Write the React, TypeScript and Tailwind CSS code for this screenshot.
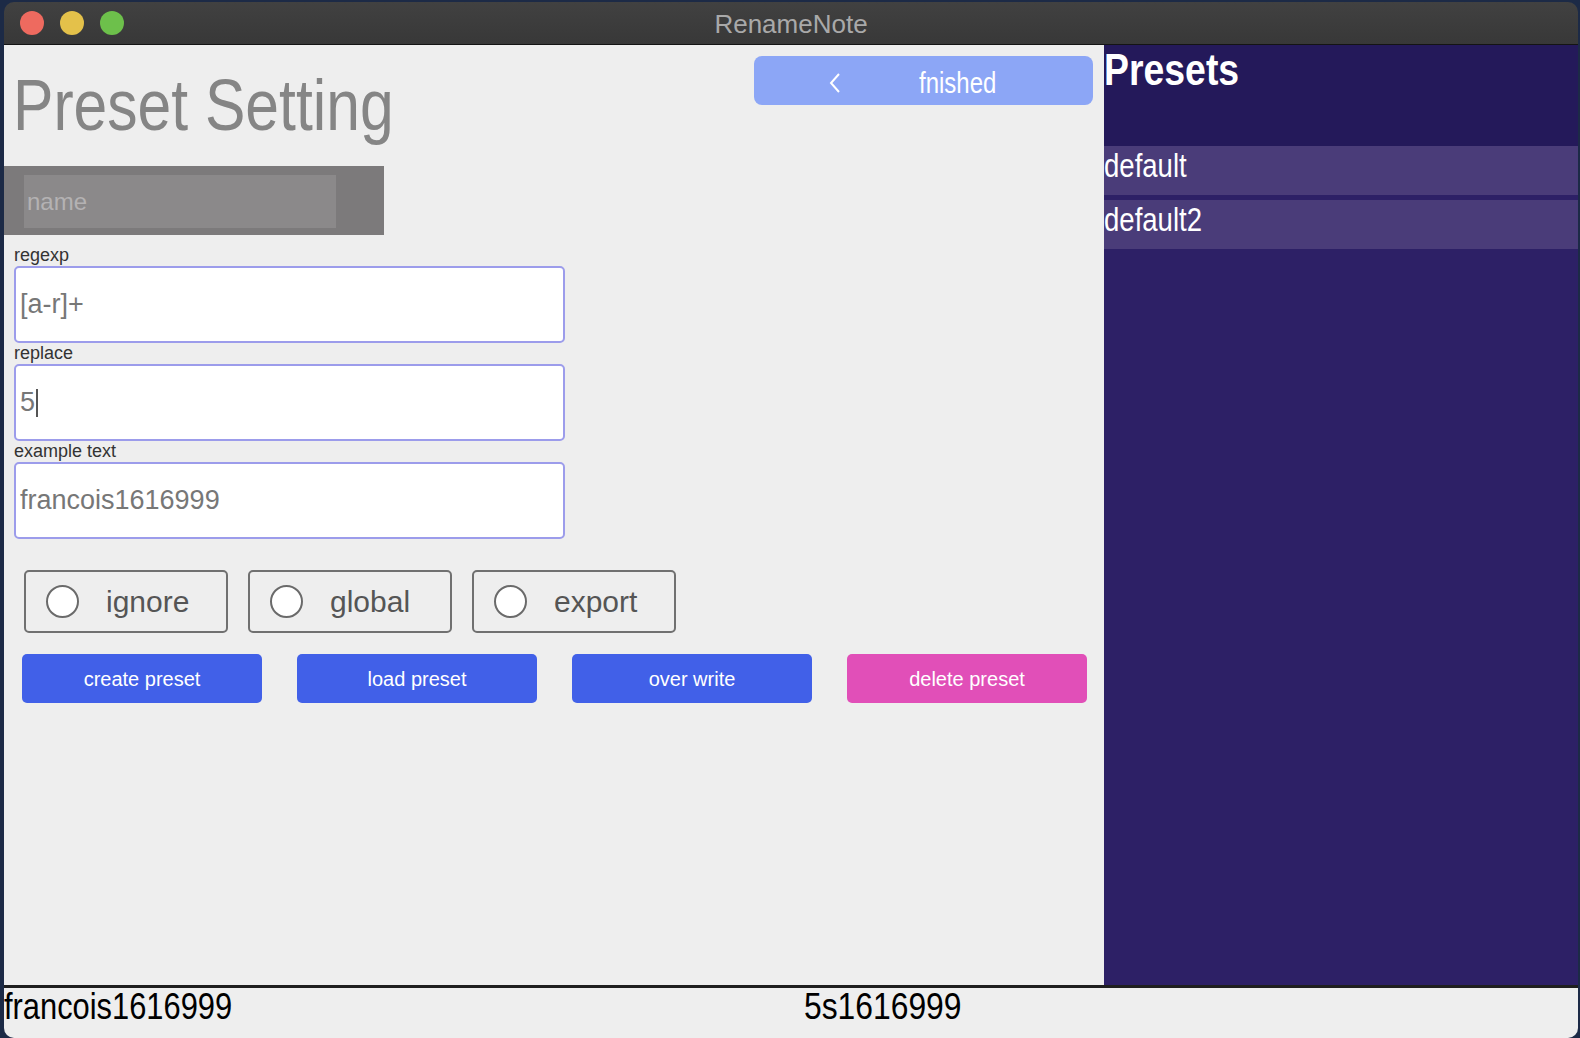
import { useState } from 'react';

const sans = "font-['Liberation_Sans',Arial,sans-serif]";

const fields = [
  { label: 'regexp', value: '[a-r]+', caret: false },
  { label: 'replace', value: '5', caret: true },
  { label: 'example text', value: 'francois1616999', caret: false },
];

const toggles = ['ignore', 'global', 'export'];

const actions = [
  { label: 'create preset', tone: 'bg-[#4160e8]' },
  { label: 'load preset', tone: 'bg-[#4160e8]' },
  { label: 'over write', tone: 'bg-[#4160e8]' },
  { label: 'delete preset', tone: 'bg-[#e14fb8]' },
];

const presets = ['default', 'default2'];

function TitleBar() {
  return (
    <div className="relative flex h-[43px] shrink-0 items-center gap-[16px] border-b border-[#141414] bg-gradient-to-b from-[#414141] to-[#383838] pl-[16px]">
      <span className="h-[24px] w-[24px] rounded-full bg-[#ee6a5f]" />
      <span className="h-[24px] w-[24px] rounded-full bg-[#e4c14a]" />
      <span className="h-[24px] w-[24px] rounded-full bg-[#6dc04b]" />
      <div className={`absolute inset-0 flex items-center justify-center pt-[3px] text-[26px] text-[#a9a9a9] ${sans}`}>
        RenameNote
      </div>
    </div>
  );
}

function Toggle({ label }: { label: string }) {
  const [on, setOn] = useState(false);
  return (
    <button
      onClick={() => setOn(!on)}
      className="flex h-[63px] w-[204px] items-center rounded-[5px] border-2 border-[#707070] pl-[20px]"
    >
      <span
        className={`h-[33px] w-[33px] rounded-full border-2 border-[#6a6a6a] ${on ? 'bg-[#4160e8]' : 'bg-white'}`}
      />
      <span className={`ml-[27px] text-[30px] leading-none text-[#555555] ${sans}`}>{label}</span>
    </button>
  );
}

function SettingPanel() {
  return (
    <div className="flex w-[1100px] shrink-0 flex-col bg-[#eeeeee]">
      <div className="flex items-start">
        <h1
          className={`ml-[9px] mt-[23px] origin-left scale-x-[0.83] text-[73px] font-normal leading-none text-[#858585] ${sans}`}
        >
          Preset Setting
        </h1>
        <button className="ml-auto mr-[11px] mt-[11px] flex h-[49px] w-[339px] items-center rounded-[8px] bg-[#8ca6f6] pt-[4px] text-white">
          <svg width="14" height="22" viewBox="0 0 14 22" className="ml-[74px]">
            <polyline points="11,2 3,11 11,20" fill="none" stroke="white" strokeWidth="2" />
          </svg>
          <span className={`ml-[77px] inline-block origin-left scale-x-[0.8] text-[30px] leading-none ${sans}`}>
            fnished
          </span>
        </button>
      </div>

      <div className="mt-[25px] h-[69px] w-[380px] bg-[#7c7a7b] pl-[20px] pt-[9px]">
        <div className={`flex h-[53px] w-[312px] items-center bg-[#8b898a] pl-[3px] text-[24px] text-[#b4b2b3] ${sans}`}>
          name
        </div>
      </div>

      <div className="mt-[10px] px-[10px]">
        {fields.map(f => (
          <div key={f.label}>
            <div className={`h-[21px] text-[18px] leading-[21px] text-[#333333] ${sans}`}>{f.label}</div>
            <div className={`flex h-[77px] w-[551px] items-center rounded-[5px] border-2 border-[#9c9ceb] bg-white pl-[4px] text-[27px] text-[#777777] ${sans}`}>
              {f.value}
              {f.caret && <span className="ml-[1px] h-[28px] w-[2px] bg-[#555555]" />}
            </div>
          </div>
        ))}

        <div className="ml-[10px] mt-[31px] flex gap-[20px]">
          {toggles.map(t => (
            <Toggle key={t} label={t} />
          ))}
        </div>

        <div className="ml-[8px] mt-[21px] flex gap-[35px]">
          {actions.map(a => (
            <button
              key={a.label}
              className={`h-[49px] w-[240px] rounded-[5px] text-[20px] text-white ${a.tone} ${sans}`}
            >
              {a.label}
            </button>
          ))}
        </div>
      </div>
    </div>
  );
}

function PresetList() {
  return (
    <div className="flex flex-1 flex-col bg-[#2d2066]">
      <div className="h-[101px] bg-[#24195a] pt-[3px]">
        <div className={`origin-left scale-x-[0.85] text-[44px] font-bold leading-none text-white ${sans}`}>Presets</div>
      </div>
      <div className="flex flex-col gap-[5px]">
        {presets.map(p => (
          <div key={p} className="h-[49px] bg-[#4a3c79]">
            <div className={`origin-left scale-x-[0.81] text-[34px] leading-[38px] text-white ${sans}`}>{p}</div>
          </div>
        ))}
      </div>
    </div>
  );
}

export default function App() {
  return (
    <div className="h-[1038px] w-[1580px] overflow-hidden bg-[#1c2a46]">
      <div className="ml-[4px] mt-[2px] flex h-[1036px] w-[1574px] flex-col overflow-hidden rounded-[10px]">
        <TitleBar />
        <div className="flex flex-1">
          <SettingPanel />
          <PresetList />
        </div>
        <div className={`flex h-[53px] shrink-0 border-t-[3px] border-[#1f1f1f] bg-[#eeeeee] text-[37px] leading-[37px] text-black ${sans}`}>
          <div className="w-[800px]">
            <span className="inline-block origin-left scale-x-[0.834]">francois1616999</span>
          </div>
          <div>
            <span className="inline-block origin-left scale-x-[0.86]">5s1616999</span>
          </div>
        </div>
      </div>
    </div>
  );
}
